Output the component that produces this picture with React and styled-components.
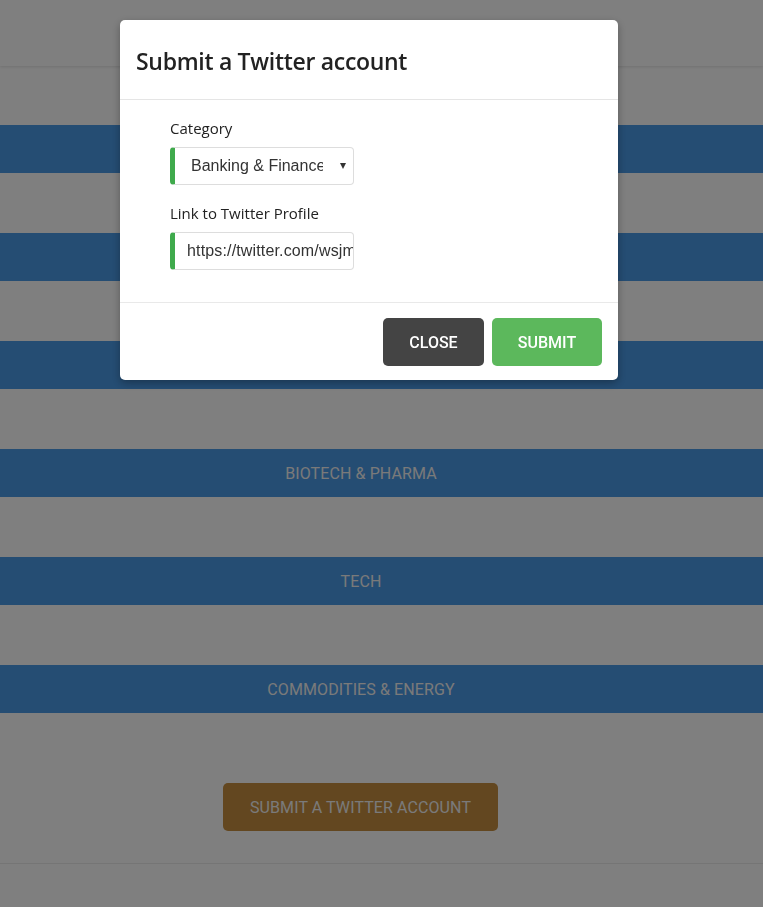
import React from "react";
import styled, { createGlobalStyle } from "styled-components";

const GlobalStyle = createGlobalStyle`
  html, body { margin: 0; padding: 0; background: #fff; }
  body { font-family: "Open Sans", "Noto Sans", sans-serif; }
  * { box-sizing: border-box; }
`;

const Page = styled.div`
  min-height: 907px;
  background: #fff;
  display: flex;
  flex-direction: column;
`;

const Header = styled.header`
  height: 66px;
  background: #fff;
  box-shadow: 0 1px 3px rgba(0, 0, 0, 0.12);
  position: relative;
`;

const Main = styled.main`
  padding-top: 59px;
  display: flex;
  flex-direction: column;
  gap: 60px;
`;

const Band = styled.div`
  height: 48px;
  padding-right: 41px;
  background: #4a9ae6;
  color: #f4f4f4;
  display: flex;
  align-items: center;
  justify-content: center;
  font-family: "Roboto", sans-serif;
  font-weight: 400;
  font-size: 16px;
  letter-spacing: 0.1px;
`;

const CtaRow = styled.div`
  display: flex;
  justify-content: center;
  padding: 70px 42px 32px 0;
`;

const CtaButton = styled.button`
  width: 275px;
  height: 48px;
  border: none;
  border-radius: 5px;
  background: #c68e40;
  color: #f4f4f4;
  font-family: "Roboto", sans-serif;
  font-weight: 400;
  font-size: 16px;
  letter-spacing: 0.1px;
`;

const Footer = styled.footer`
  border-top: 1px solid #ebebeb;
  flex: 1;
`;

const Overlay = styled.div`
  position: fixed;
  top: 0;
  left: 0;
  right: 0;
  bottom: 0;
  background: rgba(0, 0, 0, 0.5);
  z-index: 10;
`;

const Modal = styled.div`
  position: absolute;
  left: 120px;
  top: 20px;
  width: 498px;
  background: #fff;
  border-radius: 5px;
  box-shadow: 0 3px 9px rgba(0, 0, 0, 0.3);
  display: flex;
  flex-direction: column;
`;

const ModalHeader = styled.div`
  height: 80px;
  padding: 0 16px;
  display: flex;
  align-items: center;
  border-bottom: 1px solid #e5e5e5;
`;

const Title = styled.h4`
  margin: 0;
  padding-top: 3px;
  font-family: "Open Sans", sans-serif;
  font-weight: 600;
  font-size: 23px;
  color: #222;
  letter-spacing: -0.3px;
`;

const ModalBody = styled.div`
  padding: 18px 50px 32px;
  display: flex;
  flex-direction: column;
  gap: 18px;
  border-bottom: 1px solid #e9e9e9;
`;

const Field = styled.div`
  display: flex;
  flex-direction: column;
  gap: 9px;
`;

const Label = styled.label`
  font-size: 15px;
  color: #222;
  line-height: 20px;
`;

const Control = styled.div`
  position: relative;
  width: 184px;
  height: 38px;
  border: 1px solid #ddd;
  border-left: 5px solid #3faa4c;
  border-radius: 4px;
  display: flex;
  align-items: center;
  overflow: hidden;
`;

const SelectText = styled.span`
  font-family: "Liberation Sans", Arial, sans-serif;
  font-size: 16px;
  color: #333;
  padding-left: 16px;
  width: 148px;
  white-space: nowrap;
  overflow: hidden;
`;

const Caret = styled.span`
  position: absolute;
  right: 7px;
  top: 50%;
  transform: translateY(-50%);
  width: 0;
  height: 0;
  border-left: 3.5px solid transparent;
  border-right: 3.5px solid transparent;
  border-top: 6px solid #333;
`;

const Input = styled.input`
  width: 100%;
  height: 100%;
  border: none;
  outline: none;
  padding: 0 0 0 12px;
  font-family: "Liberation Sans", Arial, sans-serif;
  font-size: 16px;
  letter-spacing: 0.15px;
  color: #333;
  background: transparent;
`;

const ModalFooter = styled.div`
  padding: 15px 16px 14px;
  display: flex;
  justify-content: flex-end;
  gap: 8px;
`;

const ActionButton = styled.button`
  height: 48px;
  width: ${(p) => p.$w}px;
  border: none;
  border-radius: 5px;
  background: ${(p) => p.$bg};
  color: #fff;
  font-family: "Roboto", sans-serif;
  font-weight: 500;
  font-size: 16px;
`;

export default function App() {
  const bands = [
    "BANKING & FINANCE",
    "MEDIA & NEWS",
    "CRYPTOCURRENCY",
    "BIOTECH & PHARMA",
    "TECH",
    "COMMODITIES & ENERGY",
  ];
  return (
    <>
      <GlobalStyle />
      <Page>
        <Header />
        <Main>
          {bands.map((b) => (
            <Band key={b}>{b}</Band>
          ))}
        </Main>
        <CtaRow>
          <CtaButton>SUBMIT A TWITTER ACCOUNT</CtaButton>
        </CtaRow>
        <Footer />
      </Page>
      <Overlay>
        <Modal>
          <ModalHeader>
            <Title>Submit a Twitter account</Title>
          </ModalHeader>
          <ModalBody>
            <Field>
              <Label>Category</Label>
              <Control>
                <SelectText>Banking &amp; Finance</SelectText>
                <Caret />
              </Control>
            </Field>
            <Field>
              <Label>Link to Twitter Profile</Label>
              <Control>
                <Input readOnly defaultValue="https://twitter.com/wsjmarkets" />
              </Control>
            </Field>
          </ModalBody>
          <ModalFooter>
            <ActionButton $w={101} $bg="#444">CLOSE</ActionButton>
            <ActionButton $w={110} $bg="#5cb85c">SUBMIT</ActionButton>
          </ModalFooter>
        </Modal>
      </Overlay>
    </>
  );
}
